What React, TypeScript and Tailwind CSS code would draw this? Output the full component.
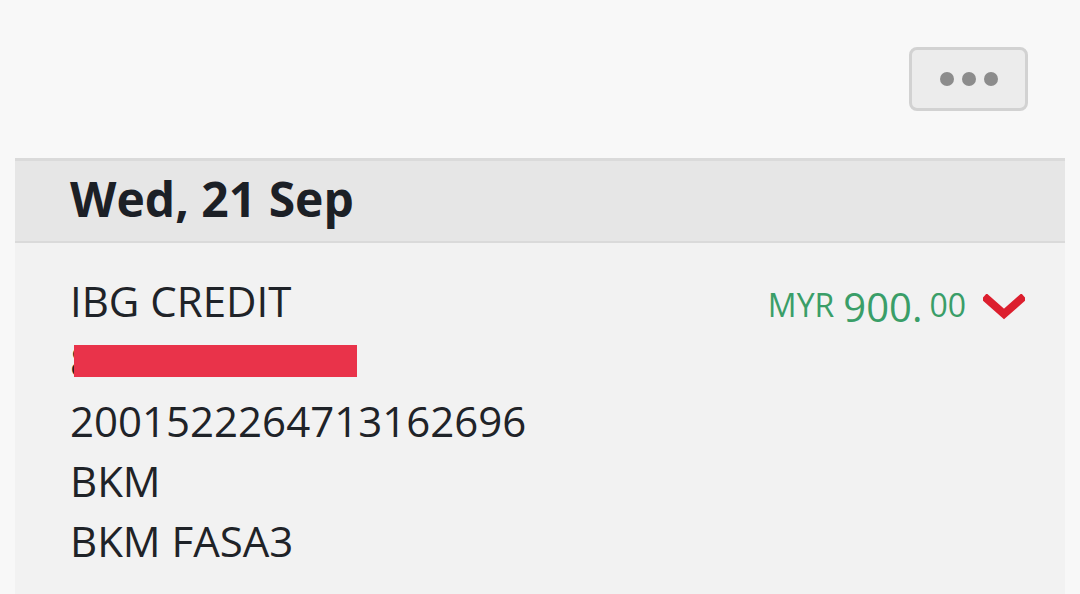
import React from 'react';

const Dots = () => (
  <div className="flex items-center gap-[8px]">
    <span className="block w-[14px] h-[14px] rounded-full bg-[#8c8c8c]" />
    <span className="block w-[14px] h-[14px] rounded-full bg-[#8c8c8c]" />
    <span className="block w-[14px] h-[14px] rounded-full bg-[#8c8c8c]" />
  </div>
);

const Chevron = () => (
  <svg width="42" height="26" viewBox="0 0 42 26" className="block">
    <polyline
      points="4,5 21,20 38,5"
      fill="none"
      stroke="#dc1f2e"
      strokeWidth="8"
      strokeLinecap="square"
      strokeLinejoin="miter"
    />
  </svg>
);

export default function App() {
  return (
    <div className="w-[1080px] h-[594px] overflow-hidden bg-[#f8f8f8] text-[#1f2328] font-['Open_Sans',sans-serif]">
      {/* top actions */}
      <div className="h-[158px] flex justify-end items-start pt-[47px] pr-[52px]">
        <button className="w-[119px] h-[64px] rounded-[8px] border-[3px] border-[#d2d2d2] bg-[#ececec] flex items-center justify-center">
          <Dots />
        </button>
      </div>

      {/* transaction group */}
      <div className="mx-[15px] bg-[#f2f2f2] h-[436px]">
        <div className="h-[85px] bg-[#e6e6e6] border-t-[3px] border-b-[2px] border-[#dadada] flex items-center pl-[55px]">
          <h2 className="text-[48px] font-bold text-[#1c2026] leading-none -translate-y-[2px]">Wed, 21 Sep</h2>
        </div>

        <div className="flex justify-between pl-[55px] pr-[40px] pt-[28px]">
          <div className="text-[42px] leading-[60px]">
            <div>IBG CREDIT</div>
            <div className="relative">
              <span>8</span>
              <span className="absolute left-[4px] top-[14px] w-[283px] h-[32px] bg-[#e9334a]" />
            </div>
            <div>2001522264713162696</div>
            <div>BKM</div>
            <div>BKM FASA3</div>
          </div>

          <div className="flex items-center h-[60px] mt-[4px] text-[#3a9e68]">
            <span className="text-[32px] -ml-[4px]">MYR</span>
            <span className="text-[40px] ml-[9px] translate-y-[2px]">900.</span>
            <span className="text-[32px] ml-[7px]">00</span>
            <span className="ml-[17px] translate-y-[2px]">
              <Chevron />
            </span>
          </div>
        </div>
      </div>
    </div>
  );
}
